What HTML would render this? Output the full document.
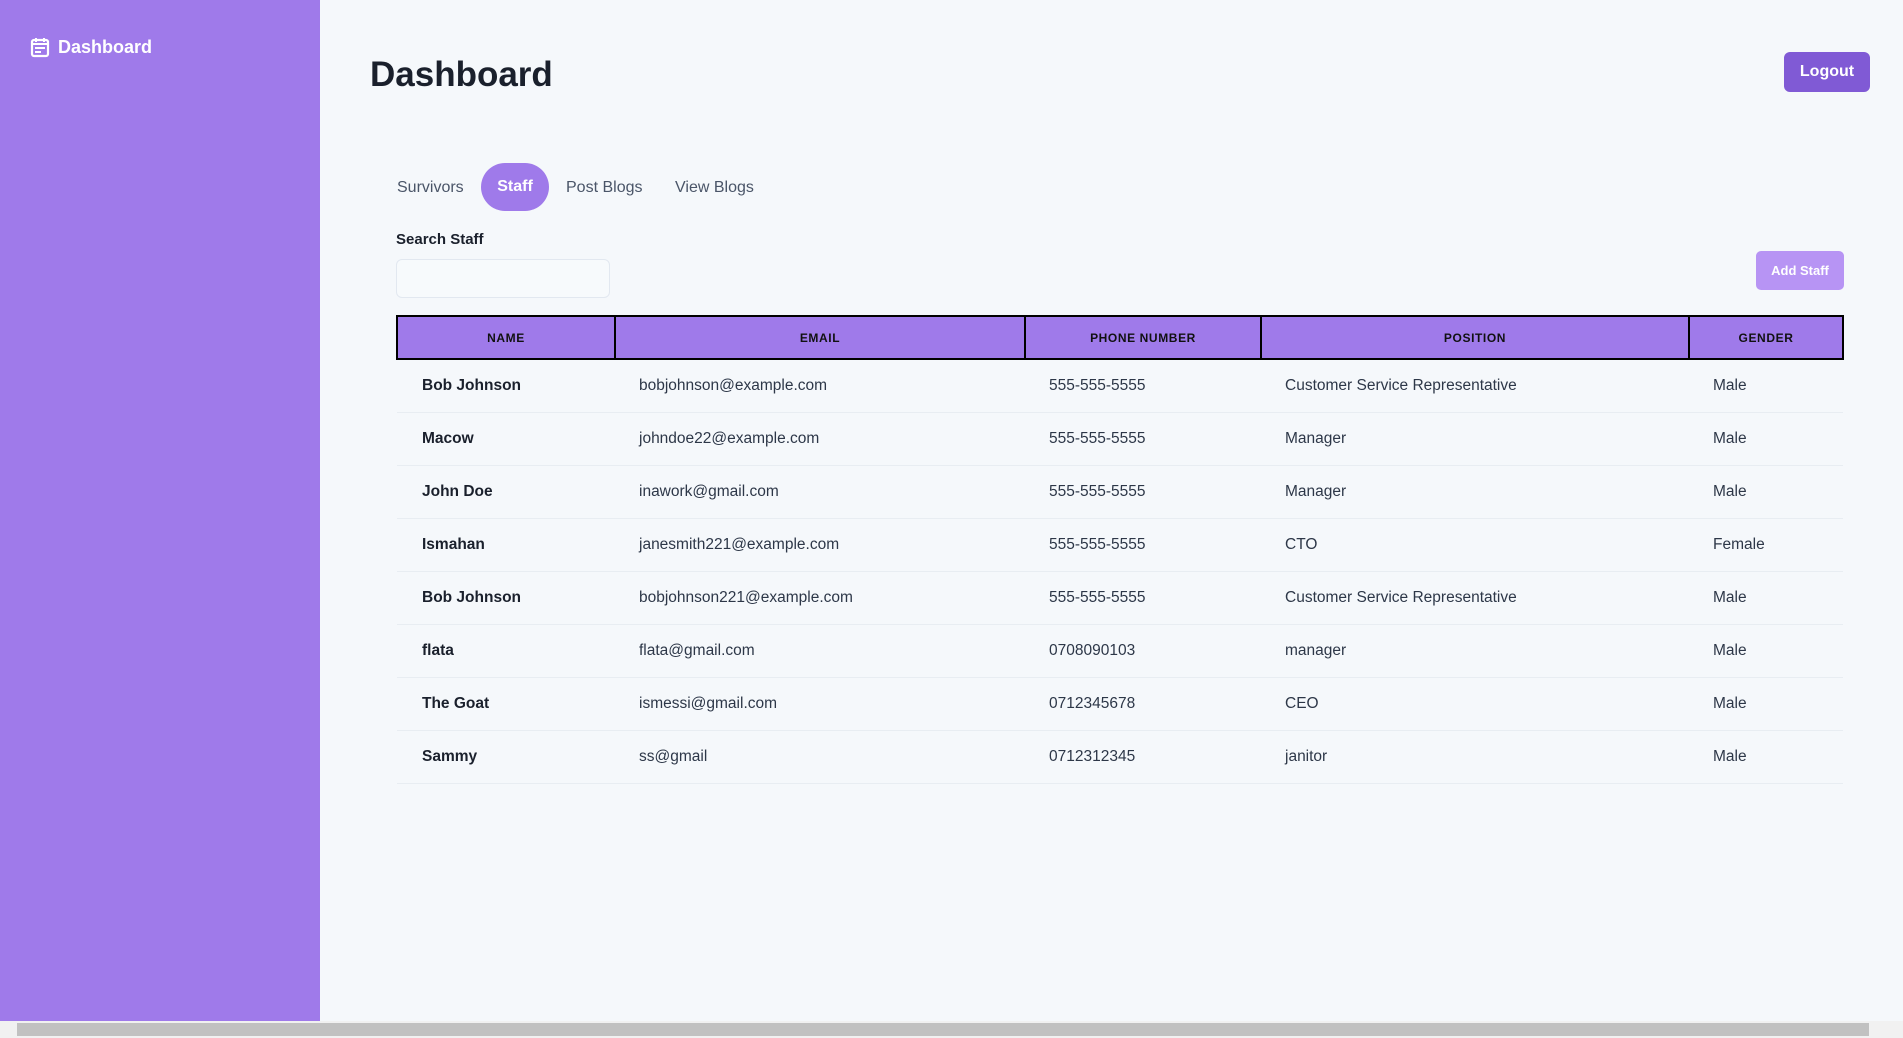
<!DOCTYPE html>
<html><head><meta charset="utf-8"><style>
*{box-sizing:border-box;margin:0;padding:0}
body{width:1903px;height:1038px;overflow:hidden;background:#f5f8fb;font-family:"Liberation Sans",sans-serif;color:#1a202c;position:relative}
.side{position:absolute;left:0;top:0;width:320px;height:1021px;background:#9f7aea}
.brand{position:absolute;left:30px;top:36px;color:#fff;font-weight:bold;font-size:18px;display:flex;align-items:center;gap:8px}
h1{position:absolute;left:370px;top:55px;font-size:35px;font-weight:bold;color:#1a202c}
.logout{position:absolute;left:1784px;top:52px;width:86px;height:40px;background:#805ad5;color:#fff;border-radius:6px;font-weight:bold;font-size:16px;display:flex;align-items:center;justify-content:center}
.tab{position:absolute;top:164px;height:48px;display:flex;align-items:center;font-size:16px;color:#4a5568}
.pill{background:#9f7aea;color:#fff;border-radius:24px;justify-content:center;width:68px;font-weight:bold}
.lbl{position:absolute;left:396px;top:231px;font-size:15px;font-weight:bold;color:#1a202c}
.inp{position:absolute;left:396px;top:259px;width:214px;height:39px;border:1px solid #e2e8f0;border-radius:6px;background:#f7fafc}
.add{position:absolute;left:1756px;top:251px;width:88px;height:39px;background:#b794f4;color:#fff;border-radius:5px;font-size:13px;font-weight:bold;display:flex;align-items:center;justify-content:center}
table{position:absolute;left:396px;top:315px;width:1448px;border-collapse:collapse;font-size:15.5px}
th{background:#9f7aea;border:2.5px solid #000;height:43px;font-size:12px;letter-spacing:.6px;font-weight:bold;color:#111}
td{height:53px;padding-left:24px;border-bottom:1px solid #e8edf2;color:#2d3748}
td:first-child{font-weight:bold;color:#1a202c;padding-left:25px}
.sb{position:absolute;left:0;top:1021px;width:1903px;height:17px;background:#f1f1f1}
.thumb{position:absolute;left:17px;top:2px;width:1852px;height:13px;background:#c1c1c1}
</style></head><body>
<div class="side"><div class="brand"><svg width="20" height="22" viewBox="0 0 20 22"><rect x="2" y="4" width="16" height="16" rx="2" fill="none" stroke="#fff" stroke-width="2.2"/><path d="M6 2v4M14 2v4M2 8h16M5 12h10M5 16h6" stroke="#fff" stroke-width="2"/></svg>Dashboard</div></div>
<h1>Dashboard</h1>
<div class="logout">Logout</div>
<div class="tab" style="left:397px">Survivors</div>
<div class="tab pill" style="left:481px;width:68px;top:163px">Staff</div>
<div class="tab" style="left:566px">Post Blogs</div>
<div class="tab" style="left:675px">View Blogs</div>
<div class="lbl">Search Staff</div>
<div class="inp"></div>
<div class="add">Add Staff</div>
<table>
<tr><th style="width:218px">NAME</th><th style="width:410px">EMAIL</th><th style="width:236px">PHONE NUMBER</th><th style="width:428px">POSITION</th><th>GENDER</th></tr>
<tr><td>Bob Johnson</td><td>bobjohnson@example.com</td><td>555-555-5555</td><td>Customer Service Representative</td><td>Male</td></tr>
<tr><td>Macow</td><td>johndoe22@example.com</td><td>555-555-5555</td><td>Manager</td><td>Male</td></tr>
<tr><td>John Doe</td><td>inawork@gmail.com</td><td>555-555-5555</td><td>Manager</td><td>Male</td></tr>
<tr><td>Ismahan</td><td>janesmith221@example.com</td><td>555-555-5555</td><td>CTO</td><td>Female</td></tr>
<tr><td>Bob Johnson</td><td>bobjohnson221@example.com</td><td>555-555-5555</td><td>Customer Service Representative</td><td>Male</td></tr>
<tr><td>flata</td><td>flata@gmail.com</td><td>0708090103</td><td>manager</td><td>Male</td></tr>
<tr><td>The Goat</td><td>ismessi@gmail.com</td><td>0712345678</td><td>CEO</td><td>Male</td></tr>
<tr><td>Sammy</td><td>ss@gmail</td><td>0712312345</td><td>janitor</td><td>Male</td></tr>
</table>
<div class="sb"><div class="thumb"></div></div>
</body></html>
